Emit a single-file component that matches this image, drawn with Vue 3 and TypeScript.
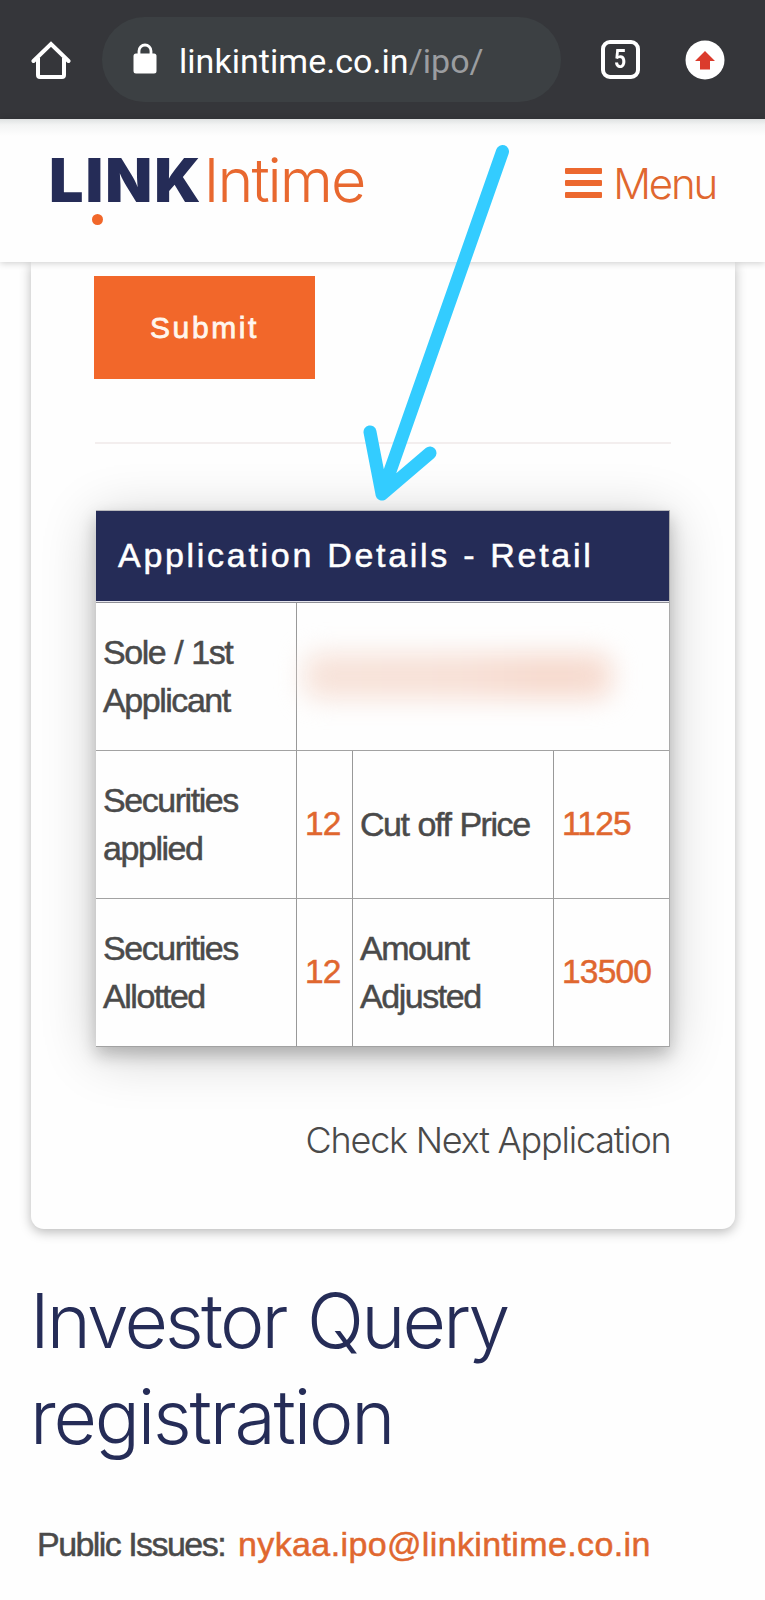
<script setup lang="ts">
interface Cell {
  text: string
  kind: 'label' | 'value'
}

const address = { host: 'linkintime.co.in', path: '/ipo/' }
const openTabs = 5

const rows: Cell[][] = [
  [
    { text: 'Securities applied', kind: 'label' },
    { text: '12', kind: 'value' },
    { text: 'Cut off Price', kind: 'label' },
    { text: '1125', kind: 'value' },
  ],
  [
    { text: 'Securities Allotted', kind: 'label' },
    { text: '12', kind: 'value' },
    { text: 'Amount Adjusted', kind: 'label' },
    { text: '13500', kind: 'value' },
  ],
]
</script>

<template>
  <div class="screen">
    <div class="browser">
      <svg class="home" width="40" height="40" viewBox="0 0 40 40" fill="none" stroke="#fff" stroke-width="4">
        <path d="M2.500 21 20 4 37.500 21" stroke-linecap="round" stroke-linejoin="miter" />
        <path d="M7 18V35Q7 37 9 37H31Q33 37 33 35V18" />
      </svg>
      <div class="address">
        <svg class="lock" width="24" height="32" viewBox="0 0 24 32">
          <path d="M6 12V8a6 6 0 0 1 12 0V12" fill="none" stroke="#fff" stroke-width="2.800" />
          <rect x="0.500" y="10.500" width="23" height="20" rx="2.500" fill="#fff" />
        </svg>
        <span class="url">{{ address.host }}<span class="path">{{ address.path }}</span></span>
      </div>
      <div class="tabs"><span>{{ openTabs }}</span></div>
      <svg class="update" width="40" height="40" viewBox="0 0 40 40">
        <circle cx="20" cy="20" r="19.500" fill="#fff" />
        <path d="M20 11 30 21H25V29.500H15V21H10Z" fill="#db3b2c" />
      </svg>
    </div>

    <header class="site">
      <div class="logo">
        <span class="link">LINK</span><span class="intime">Intime</span>
        <i class="dot"></i>
      </div>
      <div class="menu">
        <div class="bars"><i></i><i></i><i></i></div>
        <span>Menu</span>
      </div>
    </header>

    <main class="card">
      <button class="submit" type="button">Submit</button>
      <hr class="rule" />
      <section class="details">
        <h2 class="title">Application Details - Retail</h2>
        <div class="cell label sole">Sole / 1st Applicant</div>
        <div class="cell applicant"><div class="smudge"></div></div>
        <template v-for="(row, r) in rows" :key="r">
          <div v-for="(cell, c) in row" :key="c" class="cell" :class="cell.kind">{{ cell.text }}</div>
        </template>
      </section>
      <a class="next">Check Next Application</a>
    </main>

    <section class="query">
      <h1><span class="first">Investor Query</span><br />registration</h1>
      <p><span class="issues">Public Issues:</span><a class="mail">nykaa.ipo@linkintime.co.in</a></p>
    </section>

    <svg class="arrow" width="90" height="370" viewBox="355 140 90 370">
      <path d="M502.500 151.500 382 494M370 432 382 494 430 453" />
    </svg>
  </div>
</template>

<style>
body {
  background: #fefefe;
}
</style>

<style scoped>
.screen {
  position: relative;
  width: 765px;
  height: 1600px;
  overflow: hidden;
  background: #fefefe;
  font-family: 'Liberation Sans', Arial, sans-serif;
  color: #4a4a4a;
}

.browser {
  display: flex;
  align-items: center;
  box-sizing: border-box;
  height: 119px;
  padding-left: 31px;
  background: #35363a;
}

.home {
  flex: none;
}

.address {
  display: flex;
  align-items: center;
  box-sizing: border-box;
  width: 459px;
  height: 85px;
  margin-left: 31px;
  padding-left: 31px;
  border-radius: 43px;
  background: #3c4043;
}

.lock {
  margin-bottom: 1px;
}

.url {
  margin-left: 22px;
  padding-top: 2px;
  font: 34px/40px Roboto, sans-serif;
  letter-spacing: 0.040px;
  color: #fff;
  white-space: nowrap;
}

.path {
  color: #9b9da0;
}

.tabs {
  box-sizing: border-box;
  width: 39px;
  height: 39px;
  margin-left: 40px;
  border: 4px solid #fff;
  border-radius: 9px;
  font: 700 25px/31px Roboto, sans-serif;
  text-align: center;
  color: #fff;
}

.tabs span {
  display: inline-block;
  transform: scaleX(0.850);
}

.update {
  margin-left: 45px;
}

.site {
  position: relative;
  z-index: 1;
  display: flex;
  justify-content: space-between;
  box-sizing: border-box;
  height: 143px;
  padding: 30px 49px 0 49px;
  background: linear-gradient(#dfe2e2, #f3f4f4 6px, #fefefe 17px);
  box-shadow: 0 1px 7px rgba(0, 0, 0, 0.2);
  font-family: Inter, sans-serif;
}

.logo {
  position: relative;
  font-size: 61px;
  line-height: 63px;
  white-space: nowrap;
}

.link {
  font-weight: 900;
  letter-spacing: 2px;
  color: #252c57;
}

.intime {
  margin-left: 1px;
  font-weight: 300;
  letter-spacing: -2px;
  color: #e8682f;
}

.dot {
  position: absolute;
  left: 42.500px;
  top: 65px;
  width: 11px;
  height: 11px;
  border-radius: 50%;
  background: #f1672a;
}

.menu {
  display: flex;
  align-items: center;
  gap: 11px;
  height: 68px;
  color: #e0672f;
  font-size: 42px;
  font-weight: 300;
  letter-spacing: -2.200px;
}

.bars {
  display: grid;
  gap: 6px;
}

.bars i {
  width: 37px;
  height: 6px;
  border-radius: 1px;
  background: #ec682f;
}

.card {
  display: flex;
  flex-direction: column;
  align-items: flex-start;
  box-sizing: border-box;
  width: 704px;
  height: 967px;
  margin-left: 30.500px;
  padding: 14px 64px 0 63.500px;
  border-radius: 0 0 13px 13px;
  background: #fefefe;
  box-shadow: 0 3px 12px rgba(0, 0, 0, 0.28);
}

.submit {
  width: 221px;
  height: 103px;
  padding: 0;
  border: 0;
  background: #f2672a;
  color: #fff6ee;
  font: 30px/40px 'Liberation Sans', Arial, sans-serif;
  letter-spacing: 2.600px;
  -webkit-text-stroke: 0.800px #fff6ee;
}

.rule {
  width: 576px;
  height: 2px;
  margin: 63px 0 0 1px;
  border: 0;
  background: #f3eeee;
}

.details {
  display: grid;
  grid-template-columns: 201px 56px 201px 115px;
  grid-template-rows: 92px 148px 148px 148px;
  box-sizing: border-box;
  width: 574px;
  margin: 66px 0 0 2px;
  border-top: 1px solid #b9b9bd;
  border-right: 1px solid #aaa;
  background: #fefefe;
  box-shadow: 0 8px 16px rgba(0, 0, 0, 0.22), 0 8px 52px rgba(0, 0, 0, 0.2);
}

.title {
  grid-column: 1 / -1;
  margin: 0;
  padding-left: 22px;
  border-bottom: 1px solid #8f8f96;
  box-shadow: inset 0 -1px #e6e6ee;
  background: #252c57;
  color: #fff;
  font-size: 34px;
  font-weight: 400;
  line-height: 89px;
  letter-spacing: 2.700px;
  word-spacing: 1px;
  -webkit-text-stroke: 0.500px #fff;
}

.cell {
  display: flex;
  align-items: center;
  box-sizing: border-box;
  padding: 0 0 2px 7px;
  border-right: 1px solid #999;
  border-bottom: 1px solid #a2a2a2;
  font-size: 34px;
  line-height: 48px;
  letter-spacing: -1.450px;
  -webkit-text-stroke: 0.500px;
}

.cell:nth-child(4n + 3),
.applicant {
  border-right: 0;
}

.label {
  padding-right: 30px;
  word-spacing: 1px;
}

.cell:nth-child(4n + 2) {
  padding-right: 20px;
}

.value {
  padding-left: 8px;
  font-size: 33.500px;
  letter-spacing: -0.800px;
  color: #e0672f;
}

.applicant {
  grid-column: 2 / -1;
}

.smudge {
  width: 308px;
  height: 46px;
  border-radius: 14px;
  background: linear-gradient(90deg, #f7e3da, #f7e0d6 50%, #f6d9cd 80%, #f7ddd2);
  filter: blur(13px);
}

.next {
  align-self: flex-end;
  margin: 69px 0 0 0;
  font: 300 36px/48px Inter, sans-serif;
  letter-spacing: -1.220px;
  white-space: nowrap;
}

.query {
  padding: 44px 0 0 30px;
}

.query h1 {
  margin: 0;
  color: #252c57;
  font: 300 75px/96px Inter, sans-serif;
  letter-spacing: -2.200px;
}

.first {
  letter-spacing: -2.800px;
  word-spacing: 3px;
}

.query p {
  margin: 55px 0 0 7px;
  font-size: 34px;
  line-height: 48px;
  white-space: nowrap;
  -webkit-text-stroke: 0.500px;
}

.issues {
  letter-spacing: -1.550px;
}

.mail {
  margin-left: 13px;
  letter-spacing: 0.370px;
  color: #e0672f;
}

.arrow {
  position: absolute;
  z-index: 2;
  left: 355px;
  top: 140px;
  overflow: visible;
  fill: none;
  stroke: #33ccff;
  stroke-width: 13px;
  stroke-linecap: round;
  stroke-linejoin: round;
}
</style>
